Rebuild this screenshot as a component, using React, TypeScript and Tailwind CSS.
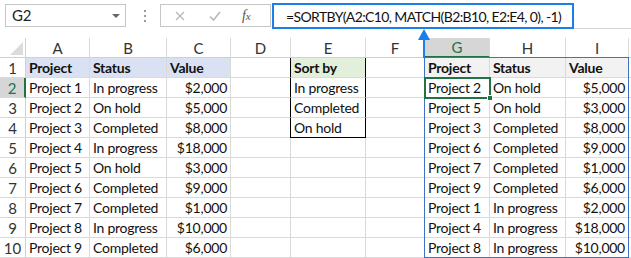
import React from 'react'

const cols = ['A', 'B', 'C', 'D', 'E', 'F', 'G', 'H', 'I']

const left = [
  ['Project 1', 'In progress', '$2,000'],
  ['Project 2', 'On hold', '$5,000'],
  ['Project 3', 'Completed', '$8,000'],
  ['Project 4', 'In progress', '$18,000'],
  ['Project 5', 'On hold', '$3,000'],
  ['Project 6', 'Completed', '$9,000'],
  ['Project 7', 'Completed', '$1,000'],
  ['Project 8', 'In progress', '$10,000'],
  ['Project 9', 'Completed', '$6,000'],
]

const sorted = [
  ['Project 2', 'On hold', '$5,000'],
  ['Project 5', 'On hold', '$3,000'],
  ['Project 3', 'Completed', '$8,000'],
  ['Project 6', 'Completed', '$9,000'],
  ['Project 7', 'Completed', '$1,000'],
  ['Project 9', 'Completed', '$6,000'],
  ['Project 1', 'In progress', '$2,000'],
  ['Project 4', 'In progress', '$18,000'],
  ['Project 8', 'In progress', '$10,000'],
]

const sortBy = ['In progress', 'Completed', 'On hold']

const Cell = ({ children, className = '' }: { children?: React.ReactNode; className?: string }) => (
  <div className={`h-[20px] border-r border-b border-[#dadada] px-[3px] leading-[20px] whitespace-nowrap overflow-hidden ${className}`}>
    {children}
  </div>
)

const Toolbar = () => (
  <div className="relative h-[38px] bg-white">
    <div className="absolute left-[5px] top-[4px] w-[121px] h-[23px] border border-[#c6c6c6] flex items-center justify-between pl-[6px] pr-[5px]">
      <span className="text-[15px] text-[#222]">G2</span>
      <span className="w-0 h-0 border-l-[4px] border-r-[4px] border-t-[4px] border-l-transparent border-r-transparent border-t-[#666]" />
    </div>
    <div className="absolute left-[144px] top-[10px] flex flex-col gap-[3px]">
      <span className="w-[2px] h-[2px] bg-[#9a9a9a]" />
      <span className="w-[2px] h-[2px] bg-[#9a9a9a]" />
      <span className="w-[2px] h-[2px] bg-[#9a9a9a]" />
    </div>
    <div className="absolute left-[160px] top-[4px] w-[111px] h-[23px] border border-[#c6c6c6] flex items-center">
      <svg className="ml-[14px]" width="10" height="10" viewBox="0 0 10 10">
        <path d="M1 1 L9 9 M9 1 L1 9" stroke="#b8b8b8" strokeWidth="1.3" fill="none" />
      </svg>
      <svg className="ml-[24px]" width="12" height="10" viewBox="0 0 12 10">
        <path d="M1 5.5 L4.5 9 L11 1" stroke="#b8b8b8" strokeWidth="1.6" fill="none" />
      </svg>
      <span className="ml-[21px] text-[14px] italic text-[#555] font-['Liberation_Serif',serif]">
        f<span className="text-[11px]">x</span>
      </span>
    </div>
    <div className="absolute left-[272px] top-[3px] w-[302px] h-[26px] border-2 border-[#1a7fe8] flex items-center pl-[12px]">
      <span className="text-[14px] tracking-[-0.62px] text-[#111] whitespace-nowrap">=SORTBY(A2:C10, MATCH(B2:B10, E2:E4, 0), -1)</span>
    </div>
    <div className="absolute left-[574px] right-0 top-[28px] h-px bg-[#d6d6d6]" />
  </div>
)

export default function App() {
  return (
    <div className="w-[631px] h-[258px] overflow-hidden bg-white text-[14px] tracking-[-0.25px] text-[#111] font-['Lato',sans-serif] relative">
      <Toolbar />
      <div className="grid grid-cols-[26px_64px_77px_64px_60px_75px_59px_65px_76px_63px_1fr]">
        <div className="h-[20px] border-r border-b border-[#d0d0d0]">
          <svg width="25" height="19" viewBox="0 0 25 19">
            <path d="M23 4 L23 17 L10 17 Z" fill="#dcdcdc" />
          </svg>
        </div>
        {cols.map(c => (
          <div
            key={c}
            className={`h-[20px] border-r border-[#dadada] text-center text-[15px] tracking-normal ${
              c === 'G'
                ? 'bg-[#d6d6d6] text-[#217346] border-b-2 border-b-[#217346] leading-[19px]'
                : 'text-[#333] border-b border-b-[#d0d0d0] leading-[20px]'
            }`}
          >
            {c}
          </div>
        ))}
        <div className="h-[20px] border-b border-[#d0d0d0]" />
        {Array.from({ length: 10 }, (_, i) => {
          const r = i + 1
          const isHeader = r === 1
          const lrow = isHeader ? ['Project', 'Status', 'Value'] : left[i - 1]
          const srow = isHeader ? ['Project', 'Status', 'Value'] : sorted[i - 1]
          const eVal = r === 1 ? 'Sort by' : r <= 4 ? sortBy[r - 2] : ''
          return (
            <React.Fragment key={r}>
              <div
                className={`h-[20px] border-b border-[#dadada] text-center leading-[20px] text-[15px] tracking-normal ${
                  r === 2 ? 'bg-[#d6d6d6] text-[#217346] border-r-2 border-r-[#217346]' : 'text-[#333] border-r border-r-[#d0d0d0]'
                }`}
              >
                {r}
              </div>
              <Cell className={isHeader ? 'font-bold bg-[#d9e1f2]' : ''}>{lrow[0]}</Cell>
              <Cell className={isHeader ? 'font-bold bg-[#d9e1f2]' : ''}>{lrow[1]}</Cell>
              <Cell className={isHeader ? 'font-bold bg-[#d9e1f2]' : 'text-right'}>{lrow[2]}</Cell>
              <Cell />
              <Cell
                className={`${isHeader ? 'font-bold bg-[#e2efda]' : ''} ${r <= 4 ? 'border-l border-l-black -ml-px' : ''} ${
                  r <= 4 ? 'border-r-black' : ''
                } ${r === 4 ? 'border-b-black' : ''}`}
              >
                {eVal}
              </Cell>
              <Cell />
              <Cell className={isHeader ? 'font-bold bg-[#f2f2f2]' : ''}>{srow[0]}</Cell>
              <Cell className={isHeader ? 'font-bold bg-[#f2f2f2]' : ''}>{srow[1]}</Cell>
              <Cell className={isHeader ? 'font-bold bg-[#f2f2f2]' : 'text-right'}>{srow[2]}</Cell>
              <div className="h-[20px] border-b border-[#dadada]" />
            </React.Fragment>
          )
        })}
      </div>

      {/* spill range border */}
      <div className="absolute left-[424px] top-[57px] w-[205px] h-[201px] border border-[#3f72c6] pointer-events-none" />
      {/* active cell G2 */}
      <div className="absolute left-[424px] top-[77px] w-[67px] h-[22px] border-2 border-[#217346] pointer-events-none" />
      <div className="absolute left-[487px] top-[95px] w-[6px] h-[6px] bg-[#217346] border border-white pointer-events-none" />
      {/* arrow from formula bar */}
      <div className="absolute left-[423px] top-[36px] w-[2px] h-[22px] bg-[#1a7fe8]" />
      <svg className="absolute left-[418px] top-[29px]" width="12" height="11" viewBox="0 0 12 11">
        <path d="M6 0 L12 11 L0 11 Z" fill="#1a7fe8" />
      </svg>
    </div>
  )
}
